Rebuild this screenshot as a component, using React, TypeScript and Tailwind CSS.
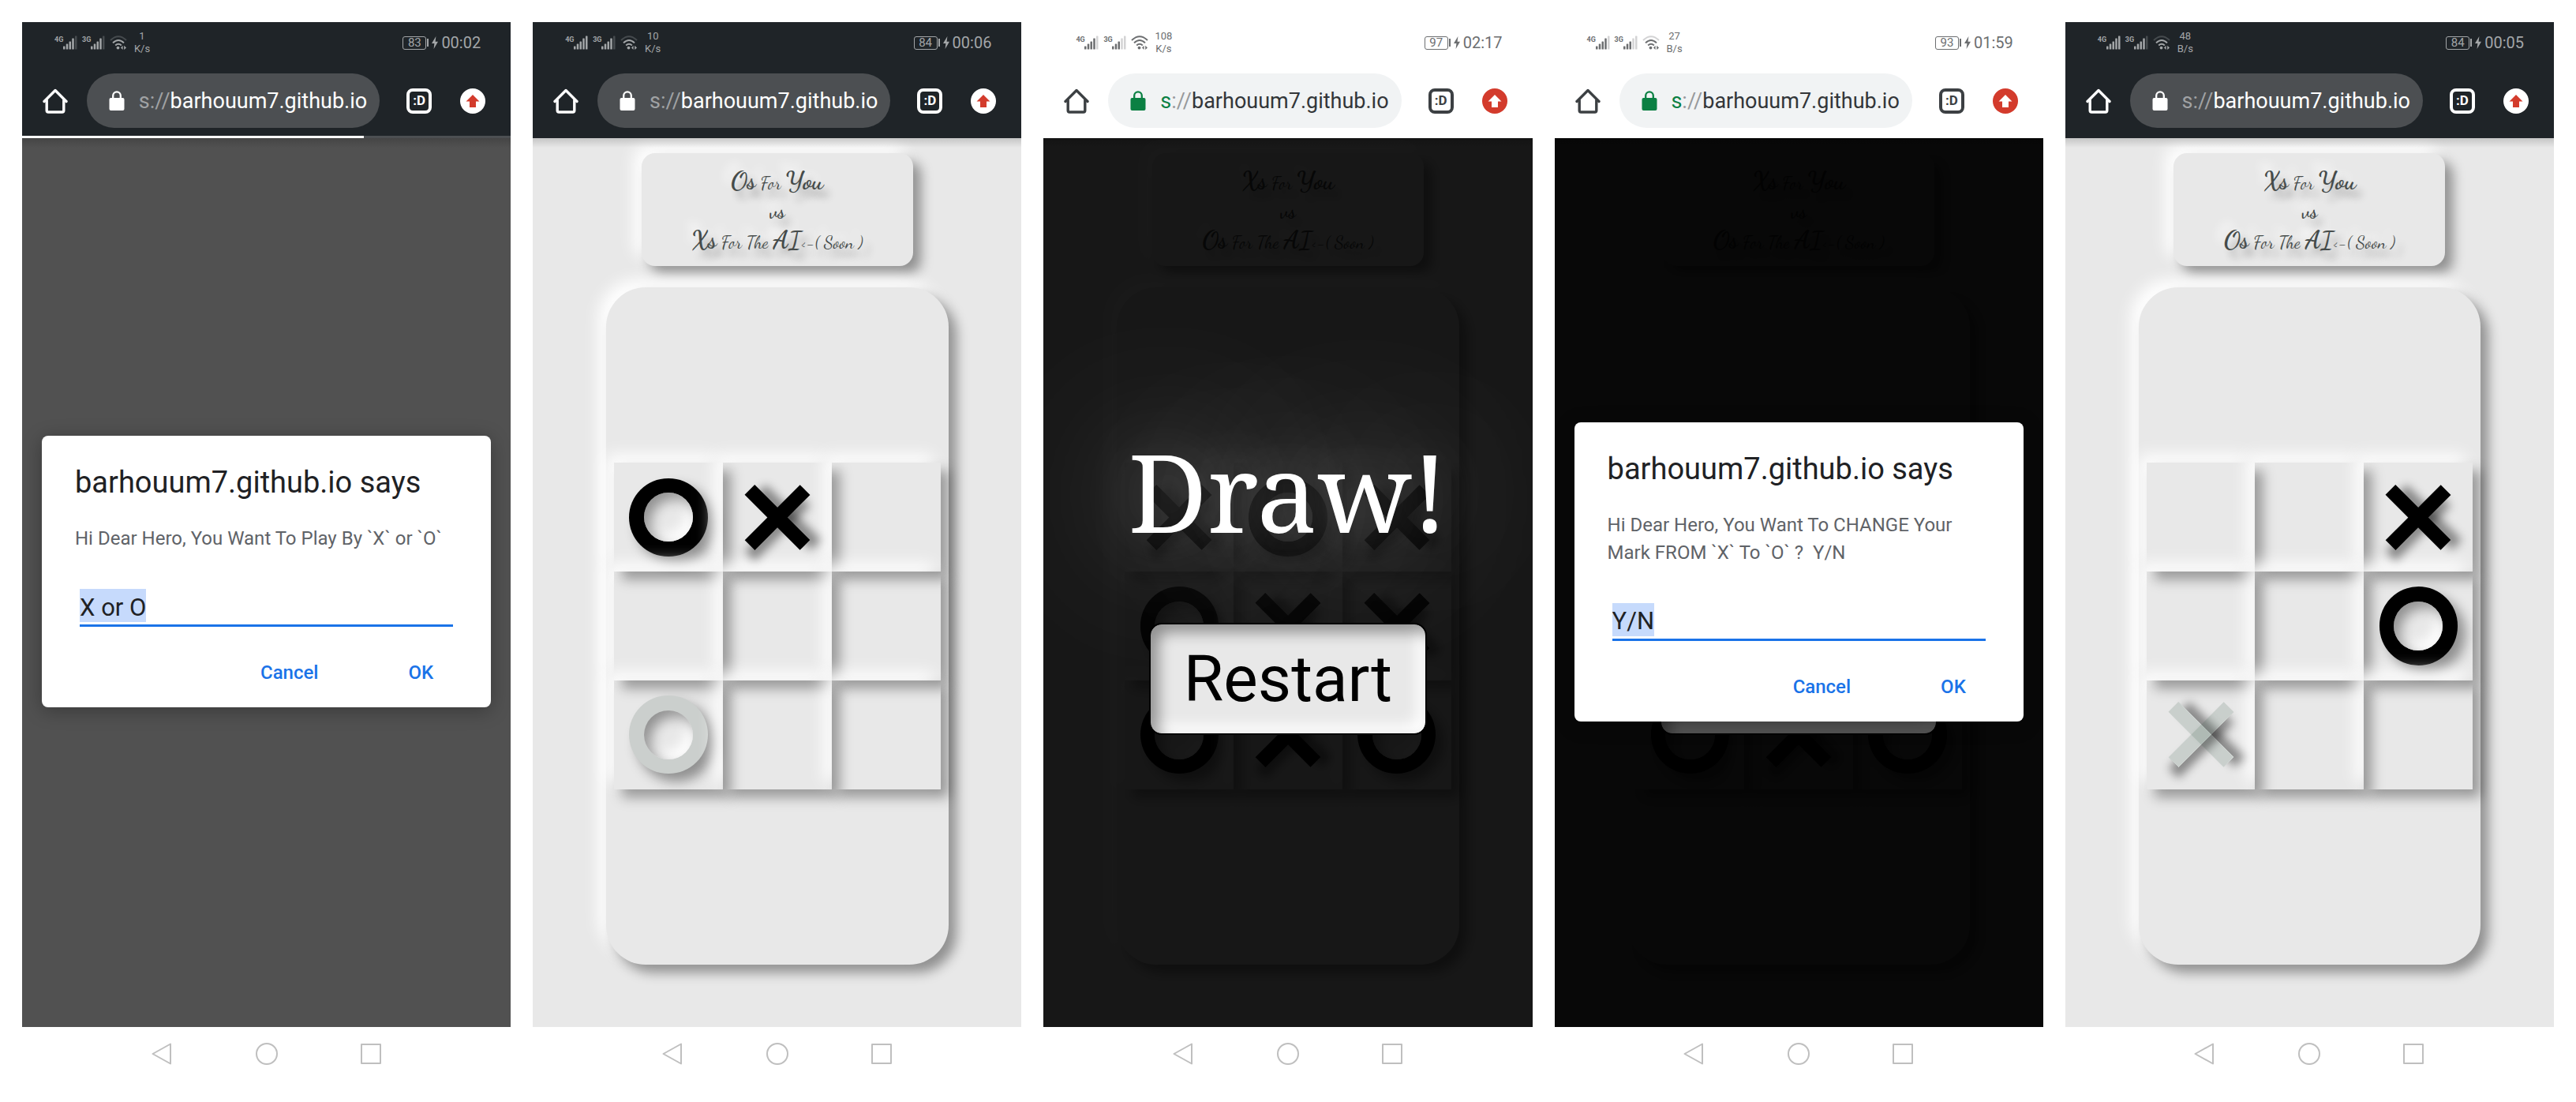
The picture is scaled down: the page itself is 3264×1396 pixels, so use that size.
import React from "react";

type Theme = "dark" | "light";
type Mark = "X" | "O" | "x" | "o" | "";

interface Status {
  theme: Theme;
  dim4g: number;
  dim3g: number;
  wifiFull?: boolean;
  rate: string;
  unit: string;
  battery: string;
  time: string;
  progress?: boolean;
}

function Bars({ dim }: { dim: number }) {
  const heights = [4, 7, 10, 14, 17];
  return (
    <svg width="18" height="18" viewBox="0 0 18 18" fill="currentColor" aria-hidden="true">
      {heights.map((h, i) => (
        <rect key={h} x={i * 3.75} y={17.5 - h} width="2.5" height={h} rx="0.6" opacity={i >= 5 - dim ? 0.3 : 1} />
      ))}
    </svg>
  );
}

function Signal({ label, dim }: { label: string; dim: number }) {
  return (
    <div className="flex items-end">
      <span className="w-[11px] self-start text-[9px] leading-[10px] font-bold">{label}</span>
      <Bars dim={dim} />
    </div>
  );
}

function Wifi({ full }: { full?: boolean }) {
  return (
    <svg width="22" height="18" viewBox="0 0 22 18" fill="none" stroke="currentColor" strokeWidth="2" aria-hidden="true">
      <path d="M1 6 Q11 -3.6 21 6" opacity={full ? 1 : 0.3} />
      <path d="M4 9.4 Q11 2.6 18 9.4" />
      <path d="M7.2 12.6 Q11 9 14.8 12.6" />
      <circle cx="10.5" cy="15.6" r="1.9" fill="currentColor" stroke="none" />
      <path d="M14 15.5 L16.6 12.8 V18 Z M21 15.5 L18.2 12.8 V18 Z" fill="currentColor" stroke="none" />
    </svg>
  );
}

function HomeIcon() {
  return (
    <svg width="32" height="32" viewBox="0 0 32 32" fill="none" stroke="currentColor" strokeWidth="3.4" strokeLinejoin="round" strokeLinecap="round" aria-hidden="true">
      <path d="M2 16.5 L16 2.5 L30 16.5" />
      <path d="M5.2 15 V28 Q5.2 30 7.2 30 H24.8 Q26.8 30 26.8 28 V15" />
    </svg>
  );
}

function LockIcon() {
  return (
    <svg width="20" height="26" viewBox="0 0 20 26" aria-hidden="true">
      <rect x="0.5" y="9" width="19" height="16" rx="2" fill="currentColor" />
      <path d="M5.2 10 V6.2 A4.8 4.8 0 0 1 14.8 6.2 V10" fill="none" stroke="currentColor" strokeWidth="2.3" />
    </svg>
  );
}

function Header(s: Status) {
  const dark = s.theme === "dark";
  return (
    <header className={dark ? "relative z-10 bg-[#1f2428] text-white" : "relative z-10 bg-white text-[#3c4043]"}>
      <div className={`flex h-[52px] items-center justify-between pr-[38px] pl-[41px] ${dark ? "text-[#a3a6a8]" : "text-[#6c6e70]"}`}>
        <div className="flex items-center gap-[6px]">
          <Signal label="4G" dim={s.dim4g} />
          <Signal label="3G" dim={s.dim3g} />
          <Wifi full={s.wifiFull} />
          <div className="w-[26px] text-center text-[13px] leading-4">
            <div>{s.rate}</div>
            <div>{s.unit}</div>
          </div>
        </div>
        <div className="flex items-center">
          <span className="flex h-[17px] w-[30px] items-center justify-center rounded-[3px] border border-current text-[15px] leading-none">
            {s.battery}
          </span>
          <span className="ml-px h-[10px] w-[2px] bg-current" />
          <svg className="mx-1" width="8" height="16" viewBox="0 0 8 16" fill="currentColor" aria-hidden="true">
            <path d="M5.4 0 L0 9 H3.4 L2.6 16 L8 6.8 H4.6 Z" />
          </svg>
          <span className="text-[20px] leading-none">{s.time}</span>
        </div>
      </div>
      <div className="flex h-[95px] items-center pr-8 pl-[26px]">
        <button type="button" aria-label="Home">
          <HomeIcon />
        </button>
        <div className={`ml-6 flex h-[69px] min-w-0 flex-1 items-center rounded-full pr-4 pl-7 ${dark ? "bg-[#4c4f52]" : "bg-[#f1f3f4]"}`}>
          <span className={dark ? "text-white" : "text-[#0b8043]"}>
            <LockIcon />
          </span>
          <div className="ml-4 flex min-w-0 flex-1 justify-end overflow-hidden text-[27px] leading-9 whitespace-nowrap">
            <span className={dark ? "text-[#a0a2a4]" : "text-[#0b8043]"}>s</span>
            <span className={dark ? "text-[#a0a2a4]" : "text-[#97999b]"}>://</span>
            <span className={dark ? "text-white" : "text-[#333639]"}>barhouum7.github.io</span>
          </div>
        </div>
        <button type="button" aria-label="Tabs" className="ml-[34px] flex size-8 items-center justify-center rounded-lg border-4 border-current text-[17px] leading-none font-bold">
          :D
        </button>
        <button type="button" aria-label="Update" className={`ml-9 flex size-8 items-center justify-center rounded-full ${dark ? "bg-white text-[#d33b2c]" : "bg-[#d33b2c] text-white"}`}>
          <svg width="18" height="16" viewBox="0 0 18 16" fill="currentColor" aria-hidden="true">
            <path d="M9 0 L17.5 8.5 H13 V16 H5 V8.5 H0.5 Z" />
          </svg>
        </button>
      </div>
      {s.progress && (
        <div className="absolute inset-x-0 bottom-0 h-[3px] bg-[#4c4f52]">
          <div className="h-full w-[70%] bg-white" />
        </div>
      )}
    </header>
  );
}

function NavBar() {
  return (
    <nav className="flex h-[67px] items-center justify-center gap-[104px] text-[#bfbfbf]">
      <button type="button" aria-label="Back">
        <svg width="28" height="28" viewBox="0 0 28 28" fill="none" stroke="currentColor" strokeWidth="2" strokeLinejoin="round">
          <path d="M1.5 14 L24 1.5 V26.5 Z" />
        </svg>
      </button>
      <button type="button" aria-label="Home screen">
        <svg width="28" height="28" viewBox="0 0 28 28" fill="none" stroke="currentColor" strokeWidth="2">
          <circle cx="14" cy="14" r="13" />
        </svg>
      </button>
      <button type="button" aria-label="Recent apps">
        <svg width="28" height="28" viewBox="0 0 28 28" fill="none" stroke="currentColor" strokeWidth="2" strokeLinejoin="round">
          <rect x="2" y="2" width="24" height="24" />
        </svg>
      </button>
    </nav>
  );
}

function Nought({ ghost }: { ghost?: boolean }) {
  return (
    <span
      className={`flex aspect-square w-[72%] items-center justify-center rounded-full shadow-[10px_10px_15px_rgba(0,0,0,0.38)] ${
        ghost ? "bg-[#cbcfcd]" : "bg-black"
      }`}
    >
      <span className="aspect-square w-[63%] rounded-full bg-[#e8e8e8] shadow-[inset_8px_8px_16px_rgba(0,0,0,0.38),inset_-8px_-8px_16px_#fff]" />
    </span>
  );
}

function Cross({ ghost }: { ghost?: boolean }) {
  const bar = ghost ? "bg-[rgba(28,68,48,0.15)]" : "bg-black";
  return (
    <span className="relative aspect-square w-[72%]">
      <span className={`absolute inset-y-0 left-[41%] w-[18%] -rotate-45 shadow-[10px_10px_12px_rgba(0,0,0,0.42)] ${bar}`} />
      <span className={`absolute inset-y-0 left-[41%] w-[18%] rotate-45 shadow-[10px_10px_12px_rgba(0,0,0,0.42)] ${bar}`} />
    </span>
  );
}

function Cell({ mark, n }: { mark: Mark; n: number }) {
  return (
    <button
      type="button"
      aria-label={`Cell ${n}`}
      className="flex aspect-square items-center justify-center shadow-[10px_10px_15px_rgba(0,0,0,0.35),-10px_-10px_20px_#fff]"
    >
      {mark === "O" && <Nought />}
      {mark === "o" && <Nought ghost />}
      {mark === "X" && <Cross />}
      {mark === "x" && <Cross ghost />}
    </button>
  );
}

function Game({ you, ai, marks }: { you: string; ai: string; marks: Mark[] }) {
  return (
    <div className="flex flex-1 flex-col items-center pt-[19px] pb-[79px]">
      <div
        className="flex h-[143px] w-[344px] max-w-full flex-col items-center justify-center rounded-[17px] pt-1 font-['Dancing_Script','Liberation_Serif',serif] text-[22px] text-[#454b4a] shadow-[10px_10px_15px_rgba(0,0,0,0.38),-10px_-10px_20px_#fff] [text-shadow:8px_10px_10px_rgba(0,0,0,0.3),-8px_-10px_12px_#fff]"
      >
        <p className="leading-9">
          <span className="text-[32px] font-bold">{you}</span> For <span className="text-[32px] font-bold">You</span>
        </p>
        <p className="text-[26px] leading-9 font-bold">vs</p>
        <p className="leading-9">
          <span className="text-[32px] font-bold">{ai}</span> For The <span className="text-[32px] font-bold">AI</span>&lt;-( Soon )
        </p>
      </div>
      <div className="mt-[27px] flex w-[70%] flex-1 flex-col justify-center rounded-[50px] p-[10px] shadow-[10px_10px_15px_rgba(0,0,0,0.38),-10px_-10px_20px_#fff]">
        <div className="grid grid-cols-3">
          {marks.map((m, i) => (
            <Cell key={i} mark={m} n={i + 1} />
          ))}
        </div>
      </div>
    </div>
  );
}

function DrawOverlay({ covered }: { covered?: boolean }) {
  const label = covered ? "invisible" : "";
  return (
    <div className="absolute inset-0 flex flex-col items-center justify-center bg-black/90 pb-[18px]">
      <h2 className={`font-['Noto_Serif','DejaVu_Serif_Condensed','Liberation_Serif',serif] text-[138px] leading-[188px] text-white [text-shadow:0_0_80px_rgba(255,255,255,0.26),0_0_200px_rgba(255,255,255,0.8)] ${label}`}>
        Draw!
      </h2>
      <button
        type="button"
        className="mt-[74px] rounded-2xl border-2 border-black bg-[#e8e8e8] bg-clip-padding px-[42px] text-[82px] leading-[138px] text-black shadow-[inset_10px_10px_18px_rgba(0,0,0,0.38),inset_-10px_-10px_18px_#fff]"
      >
        <span className={label}>Restart</span>
      </button>
    </div>
  );
}

function Prompt({ id, message, value }: { id: string; message: string; value: string }) {
  return (
    <div className="absolute inset-0 flex items-center justify-center bg-black/65 px-[25px] pb-7">
      <form role="dialog" aria-labelledby={`${id}-title`} className="w-full rounded-lg bg-white px-[42px] pt-[37px] pb-7 shadow-[0_4px_24px_rgba(0,0,0,0.3)]">
        <h2 id={`${id}-title`} className="text-[38px] leading-[44px] text-[#202124]">
          barhouum7.github.io says
        </h2>
        <label htmlFor={id} className="mt-8 block text-[24px] leading-[35px] whitespace-pre-wrap text-[#5f6368]">
          {message}
        </label>
        <div className="mx-[6px] mt-[46px] flex border-b-[3px] border-[#1a73e8] pb-[3px]">
          <input
            id={id}
            type="text"
            defaultValue={value}
            className="field-sizing-content h-[42px] bg-[#c6dafc] pt-1 text-[31px] leading-[38px] text-[#202124] outline-none"
          />
        </div>
        <div className="mt-[42px] flex justify-end gap-[114px] pr-[31px] text-[24px] leading-8 font-medium text-[#1a73e8]">
          <button type="button">Cancel</button>
          <button type="button">OK</button>
        </div>
      </form>
    </div>
  );
}

function Phone({ status, children }: { status: Status; children?: React.ReactNode }) {
  return (
    <section className="flex min-w-0 flex-col">
      <Header {...status} />
      <div className="relative flex flex-1 flex-col overflow-hidden bg-[#e8e8e8]">
        {children}
        <div className="absolute inset-x-0 top-0 h-3 bg-gradient-to-b from-black/15 to-transparent" />
      </div>
      <NavBar />
    </section>
  );
}

const drawn: Mark[] = ["X", "O", "X", "O", "X", "X", "O", "X", "O"];

export default function App() {
  return (
    <main className="grid min-h-screen grid-cols-5 gap-7 bg-white p-7 font-[Roboto,sans-serif]">
      <Phone status={{ theme: "dark", dim4g: 1, dim3g: 1, rate: "1", unit: "K/s", battery: "83", time: "00:02", progress: true }}>
        <Prompt id="choose-mark" message="Hi Dear Hero, You Want To Play By `X` or `O`" value="X or O" />
      </Phone>
      <Phone status={{ theme: "dark", dim4g: 0, dim3g: 1, rate: "10", unit: "K/s", battery: "84", time: "00:06" }}>
        <Game you="Os" ai="Xs" marks={["O", "X", "", "", "", "", "o", "", ""]} />
      </Phone>
      <Phone status={{ theme: "light", dim4g: 1, dim3g: 2, wifiFull: true, rate: "108", unit: "K/s", battery: "97", time: "02:17" }}>
        <Game you="Xs" ai="Os" marks={drawn} />
        <DrawOverlay />
      </Phone>
      <Phone status={{ theme: "light", dim4g: 1, dim3g: 2, rate: "27", unit: "B/s", battery: "93", time: "01:59" }}>
        <Game you="Xs" ai="Os" marks={drawn} />
        <DrawOverlay covered />
        <Prompt id="change-mark" message="Hi Dear Hero, You Want To CHANGE Your Mark FROM `X` To `O` ?  Y/N" value="Y/N" />
      </Phone>
      <Phone status={{ theme: "dark", dim4g: 0, dim3g: 1, rate: "48", unit: "B/s", battery: "84", time: "00:05" }}>
        <Game you="Xs" ai="Os" marks={["", "", "X", "", "", "O", "x", "", ""]} />
      </Phone>
    </main>
  );
}
